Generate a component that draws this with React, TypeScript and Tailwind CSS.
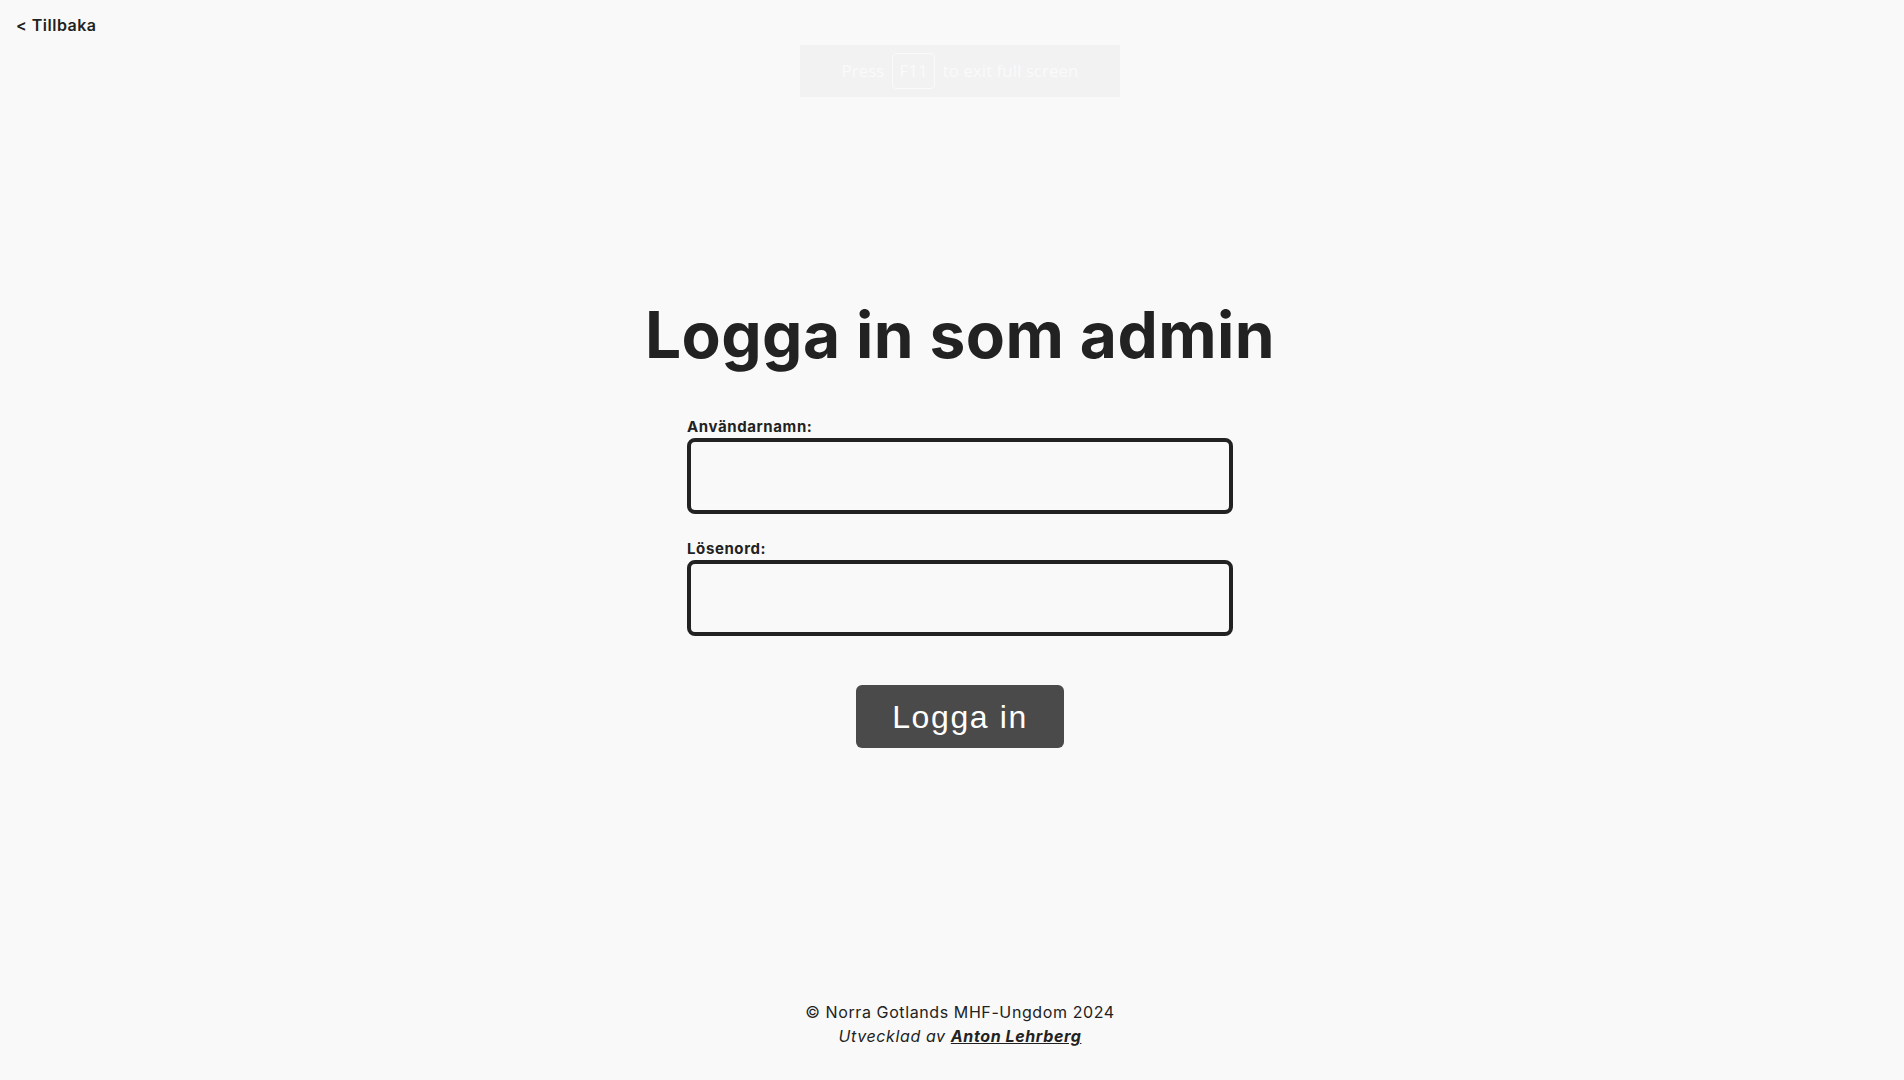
export default function App() {
  return (
    <div className="min-h-screen bg-[#f9f9f9] text-[#222222] font-['Inter','Noto_Sans',sans-serif] flex flex-col relative">
      {/* Browser full screen hint */}
      <div className="absolute top-[45px] left-[calc(50%+8px)] -translate-x-1/2 w-[320px] h-[52px] bg-[#f2f2f2] flex items-center justify-center gap-2 text-[17px] text-[#fafafa] font-['Open_Sans',sans-serif]">
        <span>Press</span>
        <span className="border border-[#fafafa] rounded px-1.5 py-1">F11</span>
        <span>to exit full screen</span>
      </div>

      <header className="px-4 pt-[13px]">
        <a href="#" className="text-[16px] font-semibold tracking-[0.5px] text-[#222222]">
          &lt; Tillbaka
        </a>
      </header>

      <main className="flex-1 flex flex-col items-center pl-4 pt-[258px]">
        <h1 className="text-[64px] leading-[80px] font-bold tracking-[0.4px]">Logga in som admin</h1>

        <form className="w-[546px] flex flex-col mt-[43px]">
          <label className="text-[15px] font-bold leading-[18px] tracking-[0.6px] mb-[2px]">Användarnamn:</label>
          <input type="text" className="h-[76px] w-full border-4 border-[#222222] rounded-lg bg-[#f9f9f9] px-3 text-lg outline-none" />

          <label className="text-[15px] font-bold leading-[18px] tracking-[0.6px] mt-[26px] mb-[2px]">Lösenord:</label>
          <input type="password" className="h-[76px] w-full border-4 border-[#222222] rounded-lg bg-[#f9f9f9] px-3 text-lg outline-none" />

          <button type="button" className="self-center mt-[49px] w-[208px] h-[63px] rounded-md bg-[#4a4a4a] text-white text-[32px] tracking-[1.6px] font-['Liberation_Sans',Arial,sans-serif]">
            Logga in
          </button>
        </form>
      </main>

      <footer className="pl-4 pb-[32px] flex flex-col items-center text-[16px] leading-[24px] tracking-[0.6px]">
        <p>© Norra Gotlands MHF-Ungdom 2024</p>
        <p className="italic">
          Utvecklad av <a href="#" className="font-bold underline">Anton Lehrberg</a>
        </p>
      </footer>
    </div>
  );
}
